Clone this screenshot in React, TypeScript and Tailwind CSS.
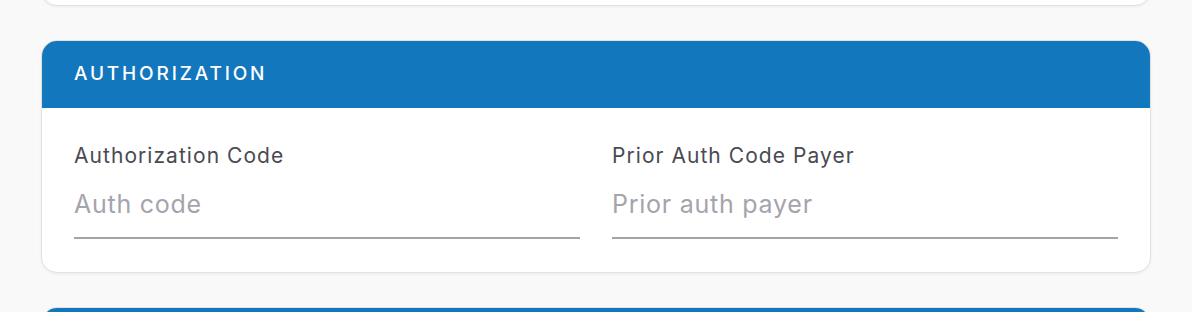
export default function App() {
  return (
    <div className="min-h-[312px] w-full bg-[#f9f9f9] font-['Inter',sans-serif] overflow-hidden">
      <div className="flex flex-col gap-[34px] px-[41px] -mt-[60px]">
        <div className="h-[66px] rounded-2xl border border-[#e2e2e2] bg-white shadow-[0_1px_3px_rgba(0,0,0,0.06)]" />

        <section className="overflow-hidden rounded-2xl border border-[#e2e2e2] bg-white shadow-[0_1px_3px_rgba(0,0,0,0.06)]">
          <div className="flex h-[67px] items-center bg-[#1277bd] px-[32px]">
            <h2 className="text-[19px] font-medium uppercase tracking-[0.15em] text-white">
              Authorization
            </h2>
          </div>
          <div className="grid grid-cols-2 gap-[32px] px-[32px] pb-[33px] pt-[34px]">
            <Field label="Authorization Code" placeholder="Auth code" />
            <Field label="Prior Auth Code Payer" placeholder="Prior auth payer" />
          </div>
        </section>

        <section className="h-[60px] overflow-hidden rounded-2xl border border-[#e2e2e2] bg-white">
          <div className="h-full bg-[#1277bd]" />
        </section>
      </div>
    </div>
  );
}

function Field({ label, placeholder }: { label: string; placeholder: string }) {
  return (
    <label className="flex flex-col">
      <span className="text-[21px] leading-[28px] tracking-[0.05em] text-[#4a4a52]">{label}</span>
      <input
        placeholder={placeholder}
        className="mt-[9px] h-[60px] border-b-2 border-[#a3a3aa] bg-transparent pb-[8px] text-[25px] tracking-[0.03em] text-[#333] outline-none placeholder:text-[#a4a4ac]"
      />
    </label>
  );
}
